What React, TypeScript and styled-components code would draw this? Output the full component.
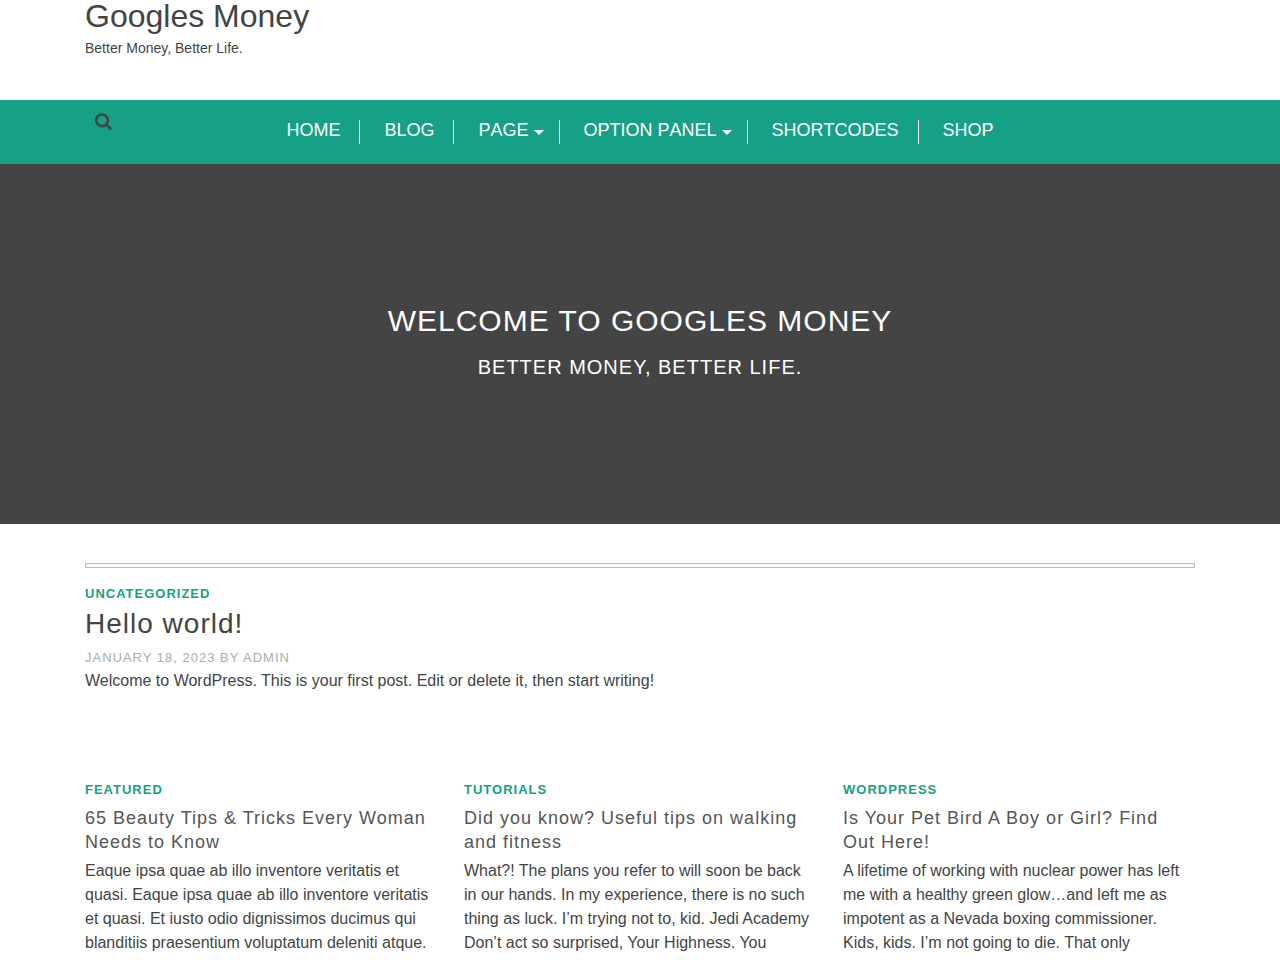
import React from "react";
import styled, { createGlobalStyle } from "styled-components";

const GlobalStyle = createGlobalStyle`
  * { box-sizing: border-box; }
  body {
    margin: 0;
    background: #fff;
    color: #444;
    font-family: "Liberation Sans", Arial, Helvetica, sans-serif;
    font-size: 16px;
    line-height: 24px;
  }
  h1, h2, h3, p, ul { margin: 0; padding: 0; font-weight: 400; }
  a { color: inherit; text-decoration: none; }
`;

const Container = styled.div`
  width: 100%;
  max-width: 1140px;
  margin: 0 auto;
  padding: 0 15px;
`;

const Header = styled.header`
  padding-bottom: 40px;
`;

const SiteTitle = styled.h1`
  padding-bottom: 4px;
  font-size: 32px;
  line-height: 32px;
`;

const Tagline = styled.p`
  font-size: 14px;
`;

const NavBar = styled.nav`
  background: #16a085;
`;

const NavInner = styled(Container)`
  display: grid;
  grid-template-columns: 40px 1fr 40px;
  padding-top: 12px;
  padding-bottom: 20px;
`;

const SearchButton = styled.button`
  display: block;
  align-self: start;
  justify-self: start;
  margin-left: 10px;
  padding: 0;
  border: 0;
  background: none;
  color: #444;
  cursor: pointer;

  svg { display: block; }
`;

const Menu = styled.ul`
  display: flex;
  flex-wrap: wrap;
  justify-content: center;
  column-gap: 24px;
  padding-top: 8px;
  list-style: none;
  font-kerning: none;
`;

const MenuItem = styled.li<{ $caret?: boolean }>`
  height: 24px;
  padding-right: ${(p) => (p.$caret ? 15 : 19)}px;
  border-right: 1px solid #fff;

  &:last-child {
    padding-right: 0;
    border-right: 0;
  }
`;

const MenuLink = styled.a`
  display: flex;
  align-items: center;
  gap: 5px;
  color: #fff;
  font-size: 18px;
  line-height: 20px;
  text-transform: uppercase;
`;

const Caret = styled.span`
  margin-top: 4px;
  border: 5px solid transparent;
  border-top-color: #fff;
  border-bottom: 0;
`;

const Hero = styled.section`
  display: flex;
  flex-direction: column;
  align-items: center;
  justify-content: center;
  gap: 16px;
  min-height: 360px;
  padding-bottom: 6px;
  background: #444;
  color: #fff;
  text-align: center;
  text-transform: uppercase;
  letter-spacing: 1px;
`;

const HeroTitle = styled.h2`
  font-size: 30px;
  line-height: 36px;
`;

const HeroText = styled.p`
  font-size: 20px;
`;

const Main = styled(Container)`
  padding-top: 39px;
  padding-bottom: 40px;
`;

const Rule = styled.div`
  height: 5px;
  margin-bottom: 16px;
  border: 1px solid #bbb;
`;

const Category = styled.a`
  display: block;
  color: #16a085;
  font-size: 13px;
  font-weight: 700;
  line-height: 20px;
  letter-spacing: 1px;
  text-transform: uppercase;
`;

const Post = styled.article`
  margin-bottom: 87px;
`;

const PostTitle = styled.h2`
  font-size: 28px;
  line-height: 40px;
  letter-spacing: 1px;
`;

const PostMeta = styled.p`
  padding: 4px 0 1px;
  color: #aaa;
  font-size: 13px;
  line-height: 20px;
  letter-spacing: 1px;
  text-transform: uppercase;
`;

const Cards = styled.section`
  display: grid;
  grid-template-columns: repeat(3, 1fr);
  gap: 27px;
`;

const CardTitle = styled.h3`
  margin: 6px 0 5px;
  color: #555;
  font-size: 18px;
  letter-spacing: 1px;
`;

const menu = [
  { label: "Home" },
  { label: "Blog" },
  { label: "Page", caret: true },
  { label: "Option Panel", caret: true },
  { label: "Shortcodes" },
  { label: "Shop" },
];

const cards = [
  {
    category: "Featured",
    title: "65 Beauty Tips & Tricks Every Woman Needs to Know",
    text: "Eaque ipsa quae ab illo inventore veritatis et quasi. Eaque ipsa quae ab illo inventore veritatis et quasi. Et iusto odio dignissimos ducimus qui blanditiis praesentium voluptatum deleniti atque.",
  },
  {
    category: "Tutorials",
    title: "Did you know? Useful tips on walking and fitness",
    text: "What?! The plans you refer to will soon be back in our hands. In my experience, there is no such thing as luck. I’m trying not to, kid. Jedi Academy Don’t act so surprised, Your Highness. You",
  },
  {
    category: "WordPress",
    title: "Is Your Pet Bird A Boy or Girl? Find Out Here!",
    text: "A lifetime of working with nuclear power has left me with a healthy green glow…and left me as impotent as a Nevada boxing commissioner. Kids, kids. I’m not going to die. That only",
  },
];

export default function App() {
  return (
    <>
      <GlobalStyle />
      <Header>
        <Container>
          <SiteTitle><a href="#home">Googles Money</a></SiteTitle>
          <Tagline>Better Money, Better Life.</Tagline>
        </Container>
      </Header>
      <NavBar>
        <NavInner>
          <SearchButton type="button" aria-label="Search">
            <svg width="18" height="18" viewBox="0 0 1792 1792" fill="currentColor" aria-hidden="true">
              <path d="M1152 832q0-185-131.5-316.5t-316.5-131.5-316.5 131.5-131.5 316.5 131.5 316.5 316.5 131.5 316.5-131.5 131.5-316.5zm512 832q0 52-38 90t-90 38q-54 0-90-38l-343-342q-179 124-399 124-143 0-273.5-55.5t-225-150-150-225-55.5-273.5 55.5-273.5 150-225 225-150 273.5-55.5 273.5 55.5 225 150 150 225 55.5 273.5q0 220-124 399l343 343q37 37 37 90z" />
            </svg>
          </SearchButton>
          <Menu>
            {menu.map((m) => (
              <MenuItem key={m.label} $caret={m.caret}>
                <MenuLink href="#menu">
                  {m.label}
                  {m.caret && <Caret />}
                </MenuLink>
              </MenuItem>
            ))}
          </Menu>
        </NavInner>
      </NavBar>
      <Hero>
        <HeroTitle>Welcome to Googles Money</HeroTitle>
        <HeroText>Better Money, Better Life.</HeroText>
      </Hero>
      <Main as="main">
        <Rule />
        <Post>
          <Category href="#uncategorized">Uncategorized</Category>
          <PostTitle><a href="#hello">Hello world!</a></PostTitle>
          <PostMeta>January 18, 2023 by admin</PostMeta>
          <p>Welcome to WordPress. This is your first post. Edit or delete it, then start writing!</p>
        </Post>
        <Cards>
          {cards.map((c) => (
            <article key={c.category}>
              <Category href="#category">{c.category}</Category>
              <CardTitle><a href="#post">{c.title}</a></CardTitle>
              <p>{c.text}</p>
            </article>
          ))}
        </Cards>
      </Main>
    </>
  );
}
